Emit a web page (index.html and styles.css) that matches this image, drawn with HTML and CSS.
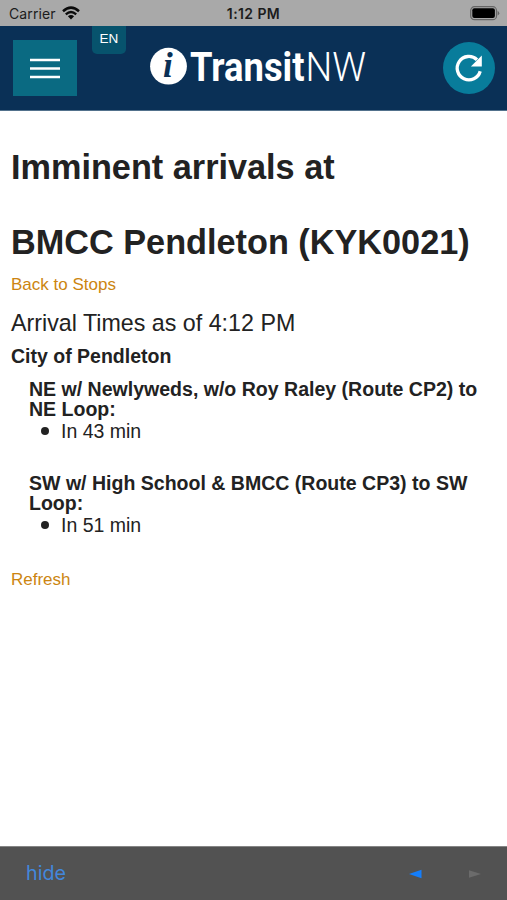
FILE: index.html
```
<!DOCTYPE html>
<html lang="en">
<head>
    <meta charset="UTF-8">
    <title>TransitNW</title>
    <meta name="viewport" content="width=device-width, initial-scale=1.0">
    <link rel="stylesheet" href="styles.css">
</head>
<body>
    <div id="statusBar">
        <div class="carrier">
            <span>Carrier</span>
            <svg width="18" height="14" viewBox="0 0 18 14">
                <path d="M1 5.2Q9 -2 17 5.2" fill="none" stroke="#0b0b0b" stroke-width="2.5"/>
                <path d="M3.8 8.3Q9 3.6 14.2 8.3" fill="none" stroke="#0b0b0b" stroke-width="2.3"/>
                <path d="M5.9 10.2Q9 7.6 12.1 10.2L9 13.5z" fill="#0b0b0b"/>
            </svg>
        </div>
        <div class="clock">1:12 PM</div>
        <div class="battery">
            <svg width="30" height="15" viewBox="0 0 30 15">
                <rect x="0.7" y="0.7" width="25.8" height="13" rx="3.8" fill="none" stroke="#666" stroke-width="1.2"/>
                <rect x="2.3" y="2.3" width="22.6" height="9.8" rx="2" fill="#000"/>
                <path d="M27.6 4.8Q31 7.2 27.6 9.6z" fill="#666"/>
            </svg>
        </div>
    </div>

    <header>
        <button id="menuButton" aria-label="Menu">
            <svg width="30" height="21" viewBox="0 0 30 21">
                <path d="M0 2H30M0 10.5H30M0 19H30" stroke="#fff" stroke-width="2.6"/>
            </svg>
        </button>
        <button id="langButton">EN</button>
        <svg class="logo" width="220" height="46" viewBox="0 0 220 46">
            <circle cx="18.5" cy="22.2" r="18.4" fill="#fff"/>
            <text class="logo-i" x="13" y="32.8">i</text>
            <text class="logo-bold" x="40" y="36.5" textLength="114.5" lengthAdjust="spacingAndGlyphs">Transit</text>
            <text class="logo-thin" x="155.5" y="36.5" textLength="60.5" lengthAdjust="spacingAndGlyphs">NW</text>
        </svg>
        <button id="reloadButton" aria-label="Reload">
            <svg width="30" height="30" viewBox="0 0 30 30">
                <path d="M26.2 18.2A11.7 11.7 0 1 1 23 6.7" fill="none" stroke="#fff" stroke-width="3.3"/>
                <path d="M27.8 2.5V13.4H16.9z" fill="#fff"/>
            </svg>
        </button>
    </header>

    <main>
        <h1>Imminent arrivals at</h1>
        <h1>BMCC Pendleton (KYK0021)</h1>
        <a href="#" class="link">Back to Stops</a>
        <h2>Arrival Times as of 4:12 PM</h2>
        <h3>City of Pendleton</h3>
        <div class="route">
            <h4>NE w/ Newlyweds, w/o Roy Raley (Route CP2) to NE Loop:</h4>
            <ul>
                <li>In 43 min</li>
            </ul>
        </div>
        <div class="route">
            <h4>SW w/ High School &amp; BMCC (Route CP3) to SW Loop:</h4>
            <ul>
                <li>In 51 min</li>
            </ul>
        </div>
        <a href="#" class="link">Refresh</a>
    </main>

    <footer>
        <a href="#" class="hide">hide</a>
        <svg width="72" height="10" viewBox="0 0 72 10">
            <path d="M0 5L12.5 0.8V9.2z" fill="#147efb"/>
            <path d="M72 5L60 1.2V8.8z" fill="#6b6b6b"/>
        </svg>
    </footer>
</body>
</html>
```
FILE: styles.css
```
* {
    box-sizing: border-box;
}
body {
    margin: 0;
    height: 900px;
    display: flex;
    flex-direction: column;
    background-color: #fff;
    color: #222;
    font-family: "Liberation Sans", Arial, sans-serif;
    overflow: hidden;
}
h1, h2, h3, h4, ul {
    margin: 0;
    padding: 0;
}
a {
    text-decoration: none;
}
button {
    border: none;
    padding: 0;
    cursor: pointer;
}

/* status bar */
#statusBar {
    display: grid;
    grid-template-columns: 1fr auto 1fr;
    height: 26px;
    padding: 0 7px 0 9px;
    align-items: center;
    background-color: #a9a9a9;
    color: #1c1c1c;
    font-family: Inter, sans-serif;
    font-size: 14px;
}
.carrier {
    display: flex;
    align-items: center;
    gap: 6px;
    letter-spacing: 0.1px;
}
.clock {
    position: relative;
    left: -1px;
    font-weight: 600;
    letter-spacing: 0.4px;
}
.battery {
    display: flex;
    justify-content: flex-end;
}

/* header */
header {
    display: flex;
    align-items: flex-start;
    height: 85px;
    padding: 0 12px 0 13px;
    background-color: #0a3056;
    border-bottom: 1px solid #52718c;
}
#menuButton {
    display: flex;
    align-items: center;
    justify-content: center;
    width: 64px;
    height: 56px;
    margin-top: 14px;
    background-color: #0a6a82;
}
#langButton {
    width: 34px;
    height: 28px;
    margin-left: 15px;
    padding-bottom: 3px;
    border-radius: 0 0 5px 5px;
    background-color: #07536d;
    color: #fff;
    font-family: "Liberation Sans", Arial, sans-serif;
    font-size: 13.5px;
}
.logo {
    margin: 18px 0 0 24px;
}
.logo text {
    fill: #fff;
    font-family: Roboto, sans-serif;
    font-size: 40.5px;
}
.logo .logo-bold {
    font-weight: 700;
}
.logo .logo-thin {
    font-weight: 300;
}
.logo .logo-i {
    fill: #0a3056;
    font-family: "Liberation Serif", serif;
    font-size: 35px;
    font-style: italic;
    font-weight: 700;
}
#reloadButton {
    display: flex;
    align-items: center;
    justify-content: center;
    width: 52px;
    height: 52px;
    margin: 16px 0 0 auto;
    border-radius: 50%;
    background-color: #087c9b;
}

/* arrivals */
main {
    flex: 1;
    padding: 36px 11px 0;
}
h1 {
    margin-bottom: 35px;
    font-size: 34.25px;
    line-height: 40px;
}
h1 + h1 {
    margin-bottom: 13px;
}
.link {
    display: block;
    color: #cc8510;
    font-size: 17px;
    line-height: 20px;
}
h2 {
    margin: 14px 0 7px;
    font-size: 23.25px;
    font-weight: 400;
    line-height: 28px;
}
h3 {
    margin-bottom: 12px;
    font-size: 19.5px;
    line-height: 24px;
}
.route {
    margin: 0 0 31px 18px;
    font-size: 19.5px;
}
.route h4 {
    font-size: 19.55px;
    line-height: 19.5px;
}
.route li {
    display: flex;
    align-items: center;
    gap: 12px;
    padding-left: 12px;
    line-height: 24px;
}
.route li::before {
    content: "";
    width: 8px;
    height: 8px;
    border-radius: 50%;
    background-color: #222;
}
.route + .link {
    margin-top: 33px;
}

/* bottom toolbar */
footer {
    display: flex;
    align-items: center;
    justify-content: space-between;
    height: 54px;
    padding: 1px 26px 0 26px;
    background-color: #525252;
    border-top: 1px solid #858585;
}
.hide {
    margin-bottom: 2px;
    color: #4287dc;
    font-family: Inter, sans-serif;
    font-size: 19.7px;
}
```
